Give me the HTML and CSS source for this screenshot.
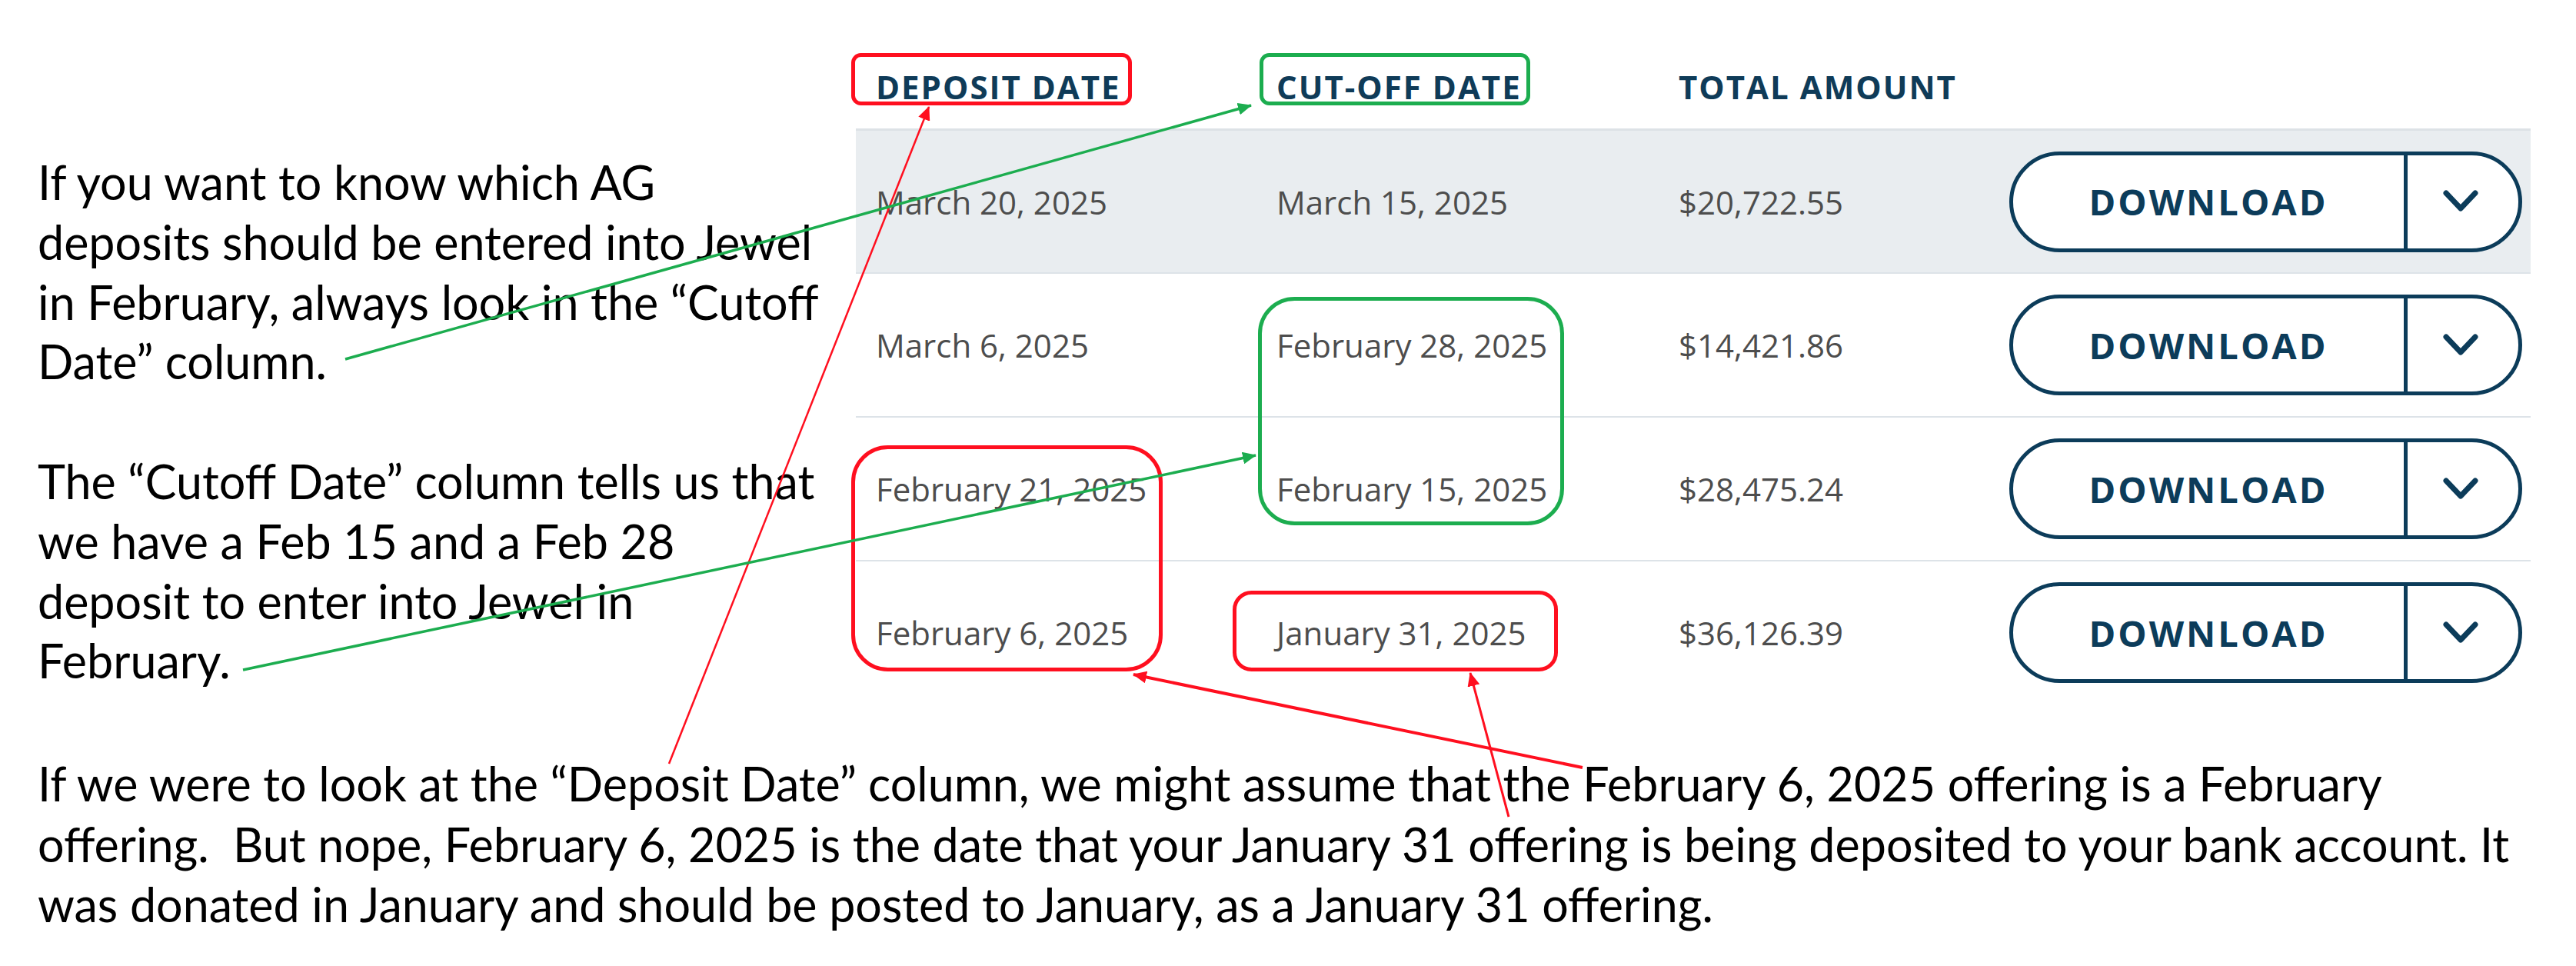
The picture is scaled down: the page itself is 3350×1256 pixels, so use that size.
FILE: index.html
```html
<!DOCTYPE html>
<html lang="en">
<head>
<meta charset="utf-8">
<title>Deposit dates vs cut-off dates</title>
<link rel="stylesheet" href="styles.css">
</head>
<body>
<div class="page">
  <div class="top">
    <div class="notes">
      <p class="note">If you want to know which AG<br>deposits should be entered into Jewel<br>in February, always look in the “Cutoff<br>Date” column.</p>
      <p class="note">The “Cutoff Date” column tells us that<br>we have a Feb 15 and a Feb 28<br>deposit to enter into Jewel in<br>February.</p>
    </div>
    <div class="table">
      <div class="thead">
        <div class="th">DEPOSIT DATE</div>
        <div class="th">CUT-OFF DATE</div>
        <div class="th">TOTAL AMOUNT</div>
        <div></div>
      </div>
      <div class="row shaded">
        <div class="td">March 20, 2025</div>
        <div class="td">March 15, 2025</div>
        <div class="td">$20,722.55</div>
        <div class="btn"><span class="btn-main">DOWNLOAD</span><span class="btn-drop"><svg width="46" height="30" viewBox="0 0 46 30"><polyline points="4,4 23,24 42,4" fill="none" stroke="#0c3c5a" stroke-width="7" stroke-linejoin="round" stroke-linecap="round"/></svg></span></div>
      </div>
      <div class="row">
        <div class="td">March 6, 2025</div>
        <div class="td">February 28, 2025</div>
        <div class="td">$14,421.86</div>
        <div class="btn"><span class="btn-main">DOWNLOAD</span><span class="btn-drop"><svg width="46" height="30" viewBox="0 0 46 30"><polyline points="4,4 23,24 42,4" fill="none" stroke="#0c3c5a" stroke-width="7" stroke-linejoin="round" stroke-linecap="round"/></svg></span></div>
      </div>
      <div class="row">
        <div class="td">February 21, 2025</div>
        <div class="td">February 15, 2025</div>
        <div class="td">$28,475.24</div>
        <div class="btn"><span class="btn-main">DOWNLOAD</span><span class="btn-drop"><svg width="46" height="30" viewBox="0 0 46 30"><polyline points="4,4 23,24 42,4" fill="none" stroke="#0c3c5a" stroke-width="7" stroke-linejoin="round" stroke-linecap="round"/></svg></span></div>
      </div>
      <div class="row">
        <div class="td">February 6, 2025</div>
        <div class="td">January 31, 2025</div>
        <div class="td">$36,126.39</div>
        <div class="btn"><span class="btn-main">DOWNLOAD</span><span class="btn-drop"><svg width="46" height="30" viewBox="0 0 46 30"><polyline points="4,4 23,24 42,4" fill="none" stroke="#0c3c5a" stroke-width="7" stroke-linejoin="round" stroke-linecap="round"/></svg></span></div>
      </div>
    </div>
  </div>
  <p class="note bottom">If we were to look at the “Deposit Date” column, we might assume that the February 6, 2025 offering is a February<br>offering.&nbsp; But nope, February 6, 2025 is the date that your January 31 offering is being deposited to your bank account. It<br>was donated in January and should be posted to January, as a January 31 offering.</p>

  <svg class="overlay" width="3350" height="1256" viewBox="0 0 3350 1256">
    <defs>
      <marker id="head-red" markerUnits="userSpaceOnUse" markerWidth="18" markerHeight="16" refX="17" refY="8" orient="auto">
        <path d="M0,0 L18,8 L0,16 z" fill="#ff0f1f"/>
      </marker>
      <marker id="head-green" markerUnits="userSpaceOnUse" markerWidth="18" markerHeight="16" refX="17" refY="8" orient="auto">
        <path d="M0,0 L18,8 L0,16 z" fill="#1cad4f"/>
      </marker>
    </defs>
    <g fill="none" stroke-width="5">
      <rect x="1109.5" y="71.5" width="360" height="63" rx="10" stroke="#ff0f1f"/>
      <rect x="1640.5" y="71.5" width="347" height="63" rx="10" stroke="#1cad4f"/>
      <rect x="1638.5" y="388.5" width="393" height="292" rx="45" stroke="#1cad4f"/>
      <rect x="1109.5" y="581.5" width="400" height="289" rx="45" stroke="#ff0f1f"/>
      <rect x="1605.5" y="770.5" width="418" height="100" rx="22" stroke="#ff0f1f"/>
    </g>
    <g fill="none">
      <line x1="870" y1="993" x2="1208" y2="139" stroke="#ff0f1f" stroke-width="2.5" marker-end="url(#head-red)"/>
      <line x1="449" y1="467" x2="1627" y2="137" stroke="#1cad4f" stroke-width="3.5" marker-end="url(#head-green)"/>
      <line x1="316" y1="871" x2="1633" y2="592" stroke="#1cad4f" stroke-width="3.5" marker-end="url(#head-green)"/>
      <line x1="2058" y1="998" x2="1474" y2="877" stroke="#ff0f1f" stroke-width="4" marker-end="url(#head-red)"/>
      <line x1="1962" y1="1062" x2="1912" y2="875" stroke="#ff0f1f" stroke-width="3" marker-end="url(#head-red)"/>
    </g>
  </svg>
</div>
</body>
</html>
```

FILE: styles.css
```css
* { box-sizing: border-box; }

html, body {
  margin: 0;
  padding: 0;
  background: #ffffff;
}

.page {
  position: relative;
  width: 3350px;
  height: 1256px;
  overflow: hidden;
  background: #ffffff;
}

.top {
  display: flex;
  align-items: flex-start;
}

.notes {
  width: 1113px;
  flex: none;
  padding: 198px 0 0 49px;
}

.note {
  margin: 0;
  font-family: Lato, "Open Sans", "Liberation Sans", sans-serif;
  font-size: 61px;
  line-height: 77.8px;
  color: #000000;
  white-space: nowrap;
}

.note + .note {
  margin-top: 77.8px;
}

.note.bottom {
  margin-top: 65px;
  margin-left: 49px;
  line-height: 78.5px;
}

.table {
  width: 2178px;
  flex: none;
  font-family: "Open Sans", "Liberation Sans", sans-serif;
}

.thead,
.row {
  display: grid;
  grid-template-columns: 521px 523px 430px 667px 1fr;
  padding-left: 26px;
}

.thead {
  height: 167px;
  align-items: end;
  padding-bottom: 26px;
}

.th {
  font-weight: 700;
  font-size: 42px;
  line-height: 57px;
  letter-spacing: 2px;
  color: #0f3b58;
  white-space: nowrap;
}

.row {
  height: 187px;
  align-items: center;
  border-top: 2px solid #dde3e8;
}

.row.shaded {
  background: #e9edf0;
  border-top: 3px solid #dde2e6;
}

.td {
  font-size: 42px;
  line-height: 57px;
  color: #4d4d4d;
  white-space: nowrap;
}

.btn {
  display: flex;
  height: 131px;
  border: 5px solid #0c3c5a;
  border-radius: 66px;
  background: #ffffff;
  overflow: hidden;
}

.btn-main {
  width: 513px;
  flex: none;
  display: flex;
  align-items: center;
  justify-content: center;
  border-right: 5px solid #0c3c5a;
  font-weight: 700;
  font-size: 47px;
  letter-spacing: 3px;
  color: #0c3c5a;
}

.btn-drop {
  flex: 1;
  display: flex;
  align-items: center;
  justify-content: center;
  padding-right: 6px;
}

.overlay {
  position: absolute;
  left: 0;
  top: 0;
  pointer-events: none;
}
```
